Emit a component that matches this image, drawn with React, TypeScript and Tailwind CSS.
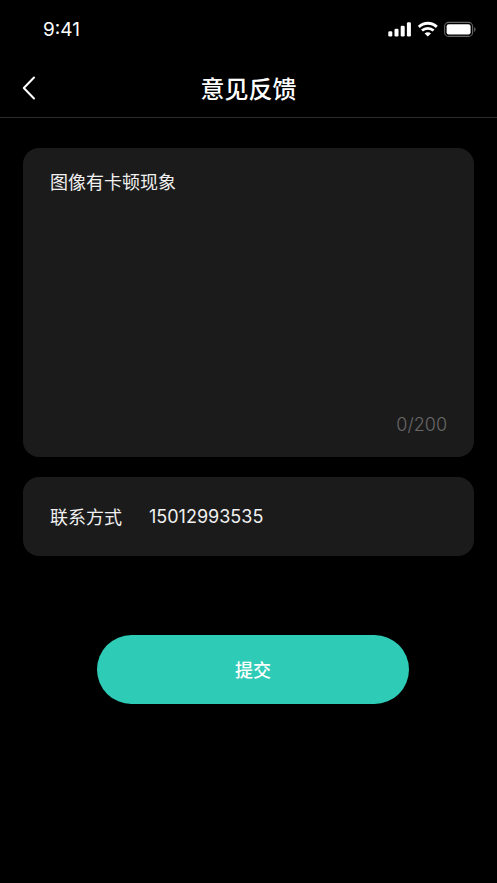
import { useState } from "react";

function StatusBar() {
  return (
    <div className="flex h-[58px] items-center justify-between pr-[21px] pl-[43px]">
      <span className="pt-0.5 text-[19px] leading-6">9:41</span>
      <div className="flex items-center gap-[6px]">
        <svg width="24" height="16" viewBox="0 0 24 16" fill="currentColor" aria-hidden="true">
          <rect x="0.3" y="10.2" width="4" height="5.3" rx="1.3" />
          <rect x="6.5" y="7.8" width="4" height="7.7" rx="1.3" />
          <rect x="12.7" y="4.8" width="4" height="10.7" rx="1.3" />
          <rect x="18.9" y="1.2" width="4" height="14.3" rx="1.3" />
        </svg>
        <svg width="20" height="16" viewBox="0 0 20 16" fill="none" stroke="currentColor" aria-hidden="true">
          <path d="M0.8 5.9C6 1 13.6 1 18.8 5.9" strokeWidth="2.9" />
          <path d="M4 9.6C7.3 6.5 12.3 6.5 15.6 9.6" strokeWidth="2.7" />
          <path d="M9.8 15.6L6.6 12.5C8.4 10.7 11.2 10.7 13 12.5Z" fill="currentColor" stroke="none" />
        </svg>
        <svg width="32" height="16" viewBox="0 0 32 16" fill="none" aria-hidden="true">
          <rect x="0.6" y="1.4" width="28" height="14" rx="4" stroke="#666" strokeWidth="1.1" />
          <rect x="2.6" y="3.3" width="24" height="10.2" rx="2.2" fill="currentColor" />
          <path d="M30.1 5.9C32 6.7 32 10.1 30.1 10.9Z" fill="#666" />
        </svg>
      </div>
    </div>
  );
}

export default function App() {
  const [feedback, setFeedback] = useState("图像有卡顿现象");
  const [contact, setContact] = useState("15012993535");

  return (
    <main className="min-h-screen bg-black font-[Inter,'Noto_Sans_CJK_SC',sans-serif] text-white">
      <StatusBar />
      <header className="grid h-[60px] grid-cols-[56px_1fr_56px] items-center border-b border-[#2c2c2c]">
        <button type="button" aria-label="返回" className="flex h-full items-center pl-[22px]">
          <svg width="14" height="24" viewBox="0 0 14 24" fill="none" stroke="currentColor" strokeWidth="2" strokeLinecap="round" strokeLinejoin="round" aria-hidden="true">
            <path d="M12 1.5L1.8 12L12 22.5" />
          </svg>
        </button>
        <h1 className="pt-1 text-center text-2xl font-medium">意见反馈</h1>
      </header>

      <form className="px-[23px] pt-[30px]" onSubmit={(e) => e.preventDefault()}>
        <div className="flex h-[309px] flex-col rounded-2xl bg-[#1b1b1b] px-[27px] pt-[21px] pb-5">
          <textarea
            aria-label="意见反馈"
            maxLength={200}
            value={feedback}
            onChange={(e) => setFeedback(e.target.value)}
            className="w-full flex-1 resize-none bg-transparent text-lg text-[#f0f0f0] outline-none"
          />
          <span className="text-right text-[18px] leading-6 font-light text-[#686868]">0/200</span>
        </div>

        <div className="mt-5 flex h-[79px] items-center gap-[27px] rounded-2xl bg-[#1b1b1b] px-[27px]">
          <label htmlFor="contact" className="shrink-0 pt-0.5 text-lg text-[#f0f0f0]">
            联系方式
          </label>
          <input
            id="contact"
            type="tel"
            value={contact}
            onChange={(e) => setContact(e.target.value)}
            className="min-w-0 flex-1 bg-transparent text-lg text-[#f0f0f0] outline-none"
          />
        </div>

        <div className="flex justify-center pt-[79px] pl-[9px]">
          <button type="submit" className="h-[69px] w-[312px] rounded-full bg-[#2ecbb6] pt-0.5 text-lg font-medium">
            提交
          </button>
        </div>
      </form>
    </main>
  );
}
